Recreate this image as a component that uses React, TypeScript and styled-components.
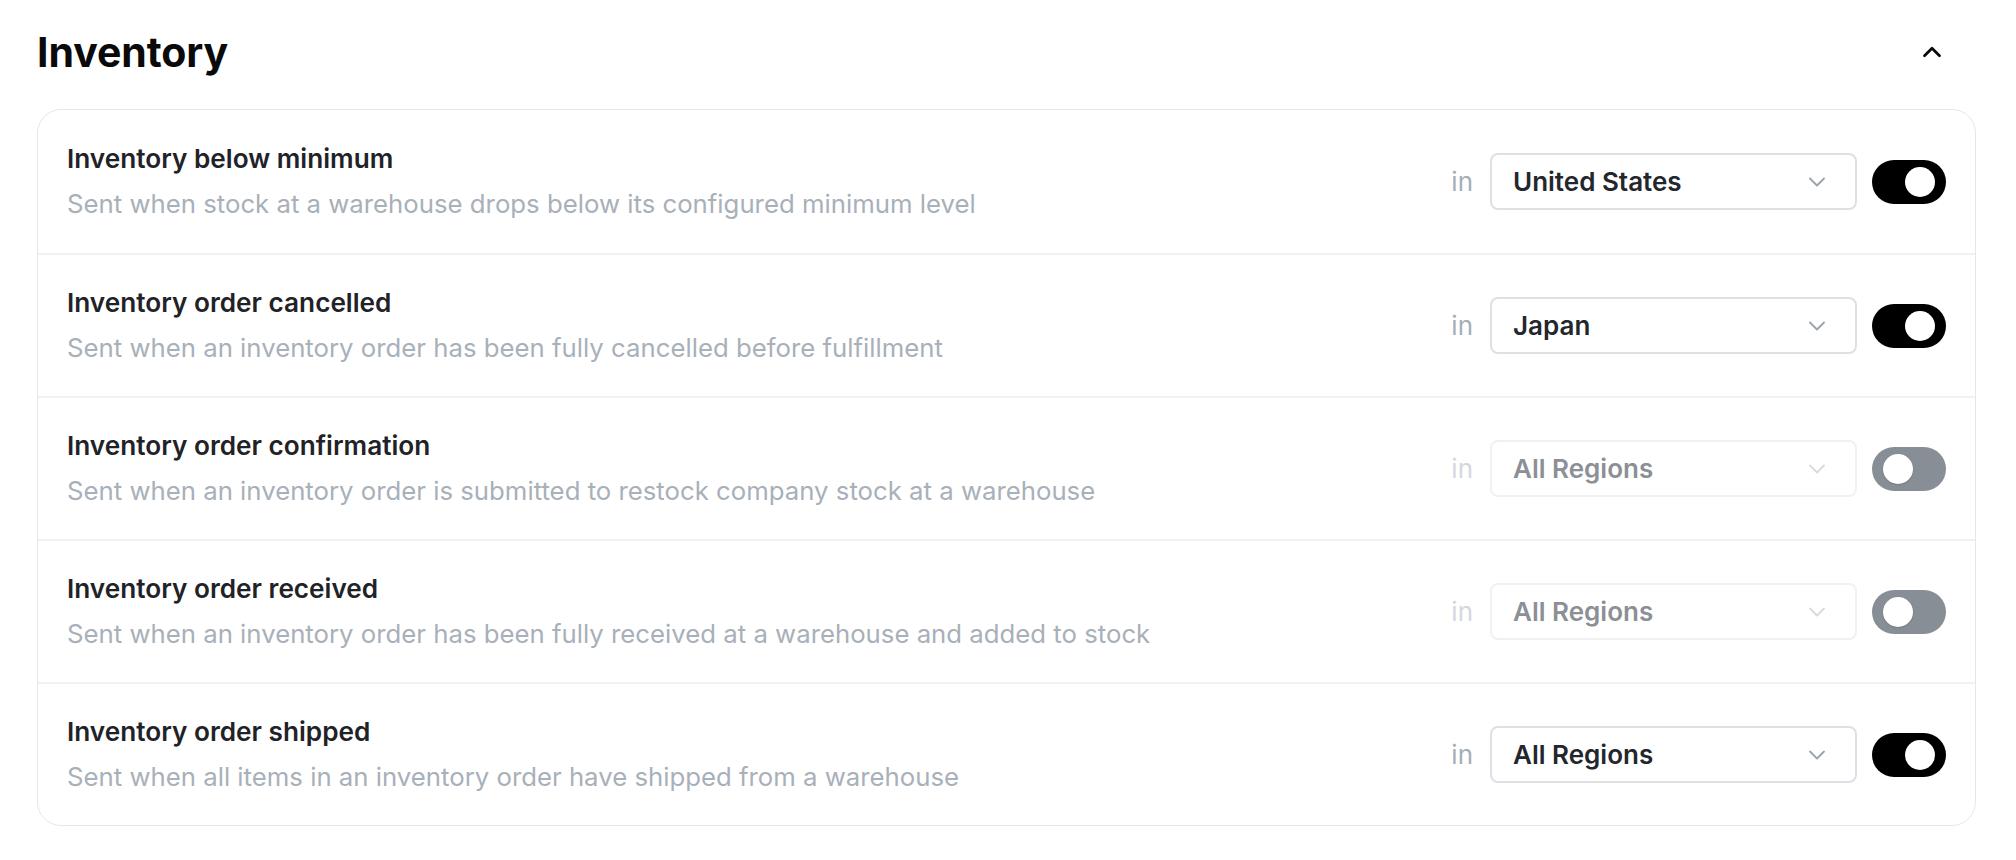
import React, { useState } from 'react';
import styled, { createGlobalStyle } from 'styled-components';
import { ChevronDown, ChevronUp } from 'lucide-react';

const GlobalStyle = createGlobalStyle`
  html, body {
    margin: 0;
    padding: 0;
    background: #ffffff;
  }
  body {
    font-family: Inter, 'Noto Sans', 'Liberation Sans', sans-serif;
    -webkit-font-smoothing: antialiased;
  }
  * {
    box-sizing: border-box;
  }
`;

interface NotificationSetting {
  id: string;
  title: string;
  description: string;
  region: string;
  enabled: boolean;
}

const initialSettings: NotificationSetting[] = [
  {
    id: 'below-minimum',
    title: 'Inventory below minimum',
    description: 'Sent when stock at a warehouse drops below its configured minimum level',
    region: 'United States',
    enabled: true,
  },
  {
    id: 'order-cancelled',
    title: 'Inventory order cancelled',
    description: 'Sent when an inventory order has been fully cancelled before fulfillment',
    region: 'Japan',
    enabled: true,
  },
  {
    id: 'order-confirmation',
    title: 'Inventory order confirmation',
    description: 'Sent when an inventory order is submitted to restock company stock at a warehouse',
    region: 'All Regions',
    enabled: false,
  },
  {
    id: 'order-received',
    title: 'Inventory order received',
    description: 'Sent when an inventory order has been fully received at a warehouse and added to stock',
    region: 'All Regions',
    enabled: false,
  },
  {
    id: 'order-shipped',
    title: 'Inventory order shipped',
    description: 'Sent when all items in an inventory order have shipped from a warehouse',
    region: 'All Regions',
    enabled: true,
  },
];

const Page = styled.main`
  padding: 28px 40px 34px 37px;
`;

const Header = styled.header`
  display: flex;
  align-items: center;
  justify-content: space-between;
  height: 48px;
  margin-bottom: 33px;
  padding-right: 24px;
`;

const Heading = styled.h2`
  margin: 0;
  font-size: 41px;
  line-height: 48px;
  font-weight: 700;
  letter-spacing: -0.1px;
  color: #0a0a0a;
`;

const CollapseButton = styled.button`
  display: flex;
  align-items: center;
  justify-content: center;
  width: 40px;
  height: 40px;
  padding: 0;
  border: none;
  background: transparent;
  color: #0a0a0a;
  cursor: pointer;
`;

const Card = styled.section`
  border: 1px solid #e4e7eb;
  border-radius: 24px;
  overflow: hidden;
`;

const Row = styled.div`
  display: flex;
  align-items: center;
  justify-content: space-between;
  min-height: 143px;
  padding: 0 29px;

  & + & {
    border-top: 2px solid #eff1f3;
  }
`;

const Text = styled.div`
  display: flex;
  flex-direction: column;
  gap: 9px;
`;

const Title = styled.div`
  font-size: 26.2px;
  line-height: 36px;
  font-weight: 600;
  color: #1f2328;
`;

const Description = styled.div`
  font-size: 25.75px;
  line-height: 36px;
  font-weight: 400;
  color: #a8b0b9;
`;

const Controls = styled.div`
  display: flex;
  align-items: center;
`;

const InLabel = styled.span<{ $muted: boolean }>`
  font-size: 26px;
  line-height: 36px;
  color: ${({ $muted }) => ($muted ? '#d3d8dd' : '#a6aeb7')};
  margin-right: 17px;
`;

const RegionSelect = styled.button<{ $muted: boolean }>`
  display: flex;
  align-items: center;
  justify-content: space-between;
  width: 367px;
  height: 57px;
  padding: 0 24px 0 21px;
  border: 2px solid ${({ $muted }) => ($muted ? '#eff1f3' : '#dde1e6')};
  border-radius: 8px;
  background: #ffffff;
  font-family: inherit;
  font-size: 26px;
  font-weight: 600;
  color: ${({ $muted }) => ($muted ? '#8c9096' : '#23272d')};
  cursor: pointer;

  svg {
    color: ${({ $muted }) => ($muted ? '#d7dbe0' : '#9ba3ad')};
  }
`;

const Switch = styled.button<{ $on: boolean }>`
  position: relative;
  width: 74px;
  height: 44px;
  margin-left: 15px;
  padding: 0;
  border: none;
  border-radius: 22px;
  background: ${({ $on }) => ($on ? '#000000' : '#878e95')};
  cursor: pointer;
`;

const Knob = styled.span<{ $on: boolean }>`
  position: absolute;
  top: 7px;
  left: ${({ $on }) => ($on ? '33px' : '11px')};
  width: 30px;
  height: 30px;
  border-radius: 50%;
  background: #ffffff;
  box-shadow: 0 1px 2px rgba(0, 0, 0, 0.15);
`;

const SettingRow: React.FC<{ setting: NotificationSetting; onToggle: () => void }> = ({
  setting,
  onToggle,
}) => (
  <Row>
    <Text>
      <Title>{setting.title}</Title>
      <Description>{setting.description}</Description>
    </Text>
    <Controls>
      <InLabel $muted={!setting.enabled}>in</InLabel>
      <RegionSelect type="button" $muted={!setting.enabled}>
        <span>{setting.region}</span>
        <ChevronDown size={28} strokeWidth={1.6} />
      </RegionSelect>
      <Switch
        type="button"
        role="switch"
        aria-checked={setting.enabled}
        $on={setting.enabled}
        onClick={onToggle}
      >
        <Knob $on={setting.enabled} />
      </Switch>
    </Controls>
  </Row>
);

const App: React.FC = () => {
  const [settings, setSettings] = useState(initialSettings);

  const toggle = (id: string) =>
    setSettings((prev) => prev.map((s) => (s.id === id ? { ...s, enabled: !s.enabled } : s)));

  return (
    <Page>
      <GlobalStyle />
      <Header>
        <Heading>Inventory</Heading>
        <CollapseButton type="button" aria-label="Collapse">
          <ChevronUp size={30} strokeWidth={2.2} />
        </CollapseButton>
      </Header>
      <Card>
        {settings.map((s) => (
          <SettingRow key={s.id} setting={s} onToggle={() => toggle(s.id)} />
        ))}
      </Card>
    </Page>
  );
};

export default App;
